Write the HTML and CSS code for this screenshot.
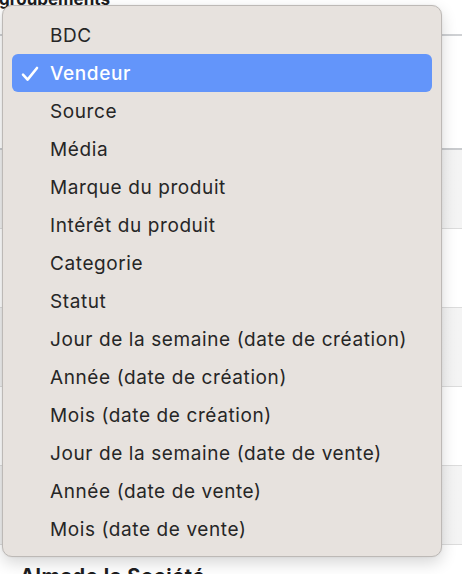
FILE: index.html
```html
<!DOCTYPE html>
<html lang="fr">
<head>
<meta charset="utf-8">
<link rel="stylesheet" href="styles.css">
</head>
<body>
<div class="page">
  <h2 class="title">groupements</h2>
  <div class="rule"></div>
  <div class="gap"></div>
  <div class="table">
    <div class="row alt"></div>
    <div class="row"></div>
    <div class="row alt"></div>
    <div class="row"></div>
    <div class="row alt"></div>
  </div>
  <h2 class="bottom">Almade la Société</h2>
</div>

<div class="menu">
  <div class="item">BDC</div>
  <div class="item selected">
    <svg class="check" width="18" height="16" viewBox="0 0 18 16"><path d="M2 8.6 L6.6 13.6 L16 2" fill="none" stroke="#fff" stroke-width="2.6" stroke-linecap="round" stroke-linejoin="round"/></svg>
    Vendeur
  </div>
  <div class="item">Source</div>
  <div class="item">Média</div>
  <div class="item">Marque du produit</div>
  <div class="item">Intérêt du produit</div>
  <div class="item">Categorie</div>
  <div class="item">Statut</div>
  <div class="item">Jour de la semaine (date de création)</div>
  <div class="item">Année (date de création)</div>
  <div class="item">Mois (date de création)</div>
  <div class="item">Jour de la semaine (date de vente)</div>
  <div class="item">Année (date de vente)</div>
  <div class="item">Mois (date de vente)</div>
</div>
</body>
</html>
```

FILE: styles.css
```css
html, body {
  margin: 0;
  padding: 0;
  background: #ffffff;
  overflow: hidden;
}
body {
  width: 462px;
  height: 574px;
  position: relative;
  font-family: Inter, "Liberation Sans", sans-serif;
}
.page {
  display: flex;
  flex-direction: column;
}
.title {
  margin: -8px 0 0 -1px;
  height: 42px;
  font-size: 17px;
  line-height: 14px;
  font-weight: 700;
  color: #1d1d1f;
}
.rule {
  height: 2px;
  background: #cfd1d4;
}
.gap {
  height: 112px;
}
.table {
  border-top: 2px solid #c9cbce;
  display: flex;
  flex-direction: column;
}
.row {
  height: 78px;
  border-bottom: 1px solid #dcdcdc;
  background: #ffffff;
}
.row.alt {
  background: linear-gradient(to right, #f0f0f0, #f4f4f4);
}
.bottom {
  margin: 20px 0 0 20px;
  font-size: 20px;
  line-height: 22px;
  font-weight: 700;
  letter-spacing: 0.6px;
  color: #1d1d1f;
}
.menu {
  position: absolute;
  top: 5px;
  left: 2px;
  width: 440px;
  height: 552px;
  box-sizing: border-box;
  background: #e7e2de;
  border: 1px solid #bdb9b6;
  border-radius: 10px;
  box-shadow: 0 6px 16px rgba(0, 0, 0, 0.16), 0 0 2px rgba(0, 0, 0, 0.08);
  padding: 10px 9px 0 9px;
  display: flex;
  flex-direction: column;
}
.item {
  height: 38px;
  display: flex;
  align-items: center;
  padding-left: 38px;
  font-size: 19px;
  letter-spacing: 0.6px;
  color: #262626;
  border-radius: 6px;
  position: relative;
  white-space: nowrap;
}
.item.selected {
  background: #6395fa;
  color: #ffffff;
  font-weight: 500;
}
.check {
  position: absolute;
  left: 9px;
  top: 12px;
}
```
